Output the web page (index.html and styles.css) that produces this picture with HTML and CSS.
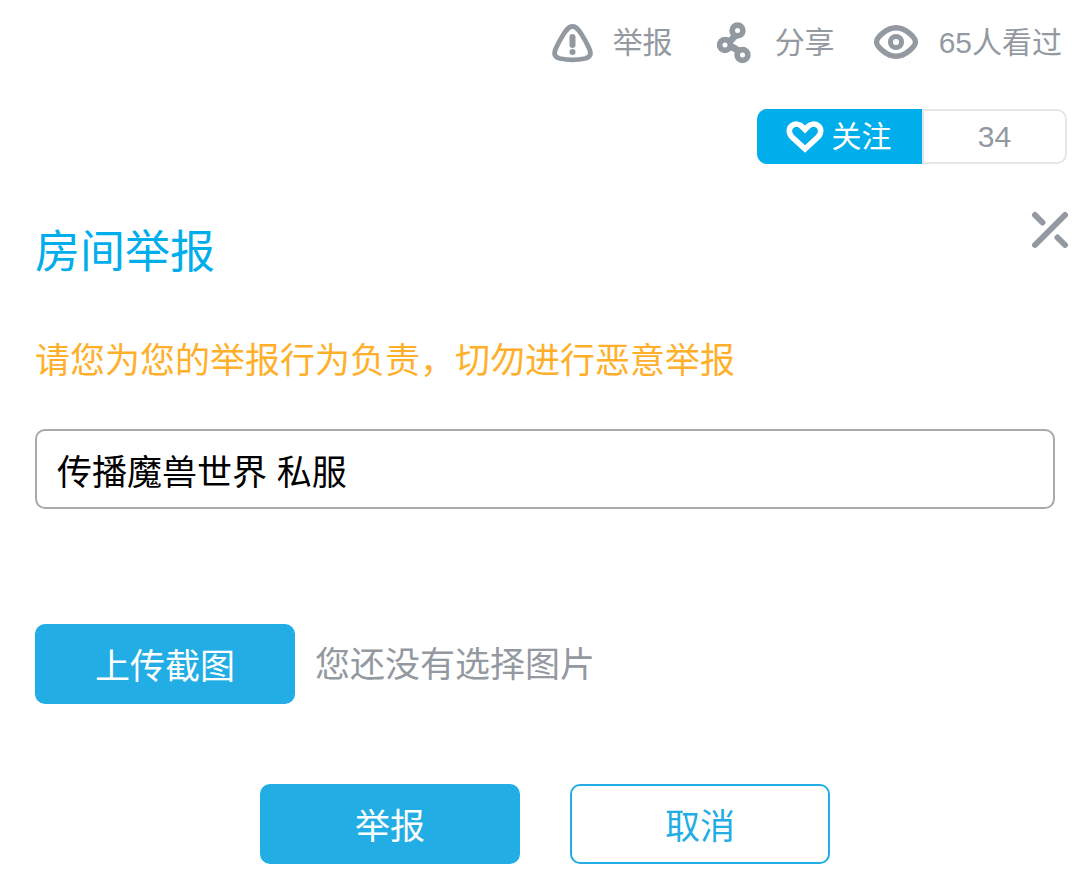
FILE: index.html
```html
<!DOCTYPE html>
<html lang="zh-CN">
<head>
<meta charset="utf-8">
<meta name="viewport" content="width=device-width, initial-scale=1">
<title>房间举报</title>
<link rel="stylesheet" href="styles.css">
</head>
<body>
<header class="room-head">
  <div class="room-tools">
    <button class="tool" type="button">
      <svg class="icon-report" width="42" height="44" viewBox="1 0 42 44" aria-hidden="true">
        <path d="M22.500 5.500C26 5.500 28 8 31 12.500C34.500 18 37 22.500 39 27C41.500 32.500 41 36 35 37.500C27 39.300 18 39.300 10 37.500C4 36 3.500 32.500 6 27C8 22.500 10.500 18 14 12.500C17 8 19 5.500 22.500 5.500Z" fill="none" stroke="currentColor" stroke-width="4.800"/>
        <path d="M22.500 16v8" fill="none" stroke="currentColor" stroke-width="6" stroke-linecap="round"/>
        <circle cx="22.500" cy="31" r="3" fill="currentColor"/>
      </svg>
      <span>举报</span>
    </button>
    <button class="tool" type="button">
      <svg class="icon-share" width="44" height="44" viewBox="0 0 44 44" aria-hidden="true">
        <path d="M26.500 9.500Q24 17 14.500 24Q25 26 31.500 34" fill="none" stroke="currentColor" stroke-width="7"/>
        <circle cx="26.500" cy="9.500" r="8.200" fill="currentColor"/>
        <circle cx="14" cy="24" r="8.200" fill="currentColor"/>
        <circle cx="31.500" cy="34" r="8.200" fill="currentColor"/>
        <circle class="hole" cx="26.500" cy="9.500" r="2.500"/>
        <circle class="hole" cx="14" cy="24" r="2.500"/>
        <circle class="hole" cx="31.500" cy="34" r="2.500"/>
      </svg>
      <span>分享</span>
    </button>
    <div class="tool">
      <svg class="icon-views" width="46" height="44" viewBox="0 0 46 44" aria-hidden="true">
        <path d="M3.500 21C3.500 17 13 6.700 23 6.700C33 6.700 42.500 17 42.500 21C42.500 25 33 35.200 23 35.200C13 35.200 3.500 25 3.500 21Z" fill="none" stroke="currentColor" stroke-width="5.400"/>
        <circle cx="23" cy="21" r="5.600" fill="none" stroke="currentColor" stroke-width="5"/>
      </svg>
      <span>65人看过</span>
    </div>
  </div>
  <div class="follow">
    <button class="follow-button" type="button">
      <svg width="38" height="34" viewBox="0 0 38 34" aria-hidden="true">
        <path d="M19 29L6 17C2.500 13.500 2.500 8.500 5.500 6C9 3.200 13.500 3.800 16 6.500L19 9.500L22 6.500C24.500 3.800 29 3.200 32.500 6C35.500 8.500 35.500 13.500 32 17Z" fill="none" stroke="currentColor" stroke-width="5.600"/>
      </svg>
      <span>关注</span>
    </button>
    <span class="follow-count">34</span>
  </div>
</header>
<main class="report">
  <div class="report-head">
    <h1 class="report-title">房间举报</h1>
    <button class="close" type="button" aria-label="关闭">
      <svg width="40" height="40" viewBox="0 0 40 40" aria-hidden="true">
        <path d="M5 35L35 5M5 5L12.500 12.500M27.500 27.500L35 35" fill="none" stroke="currentColor" stroke-width="6" stroke-linecap="round"/>
      </svg>
    </button>
  </div>
  <form class="report-form">
    <label class="warning" for="reason">请您为您的举报行为负责，切勿进行恶意举报</label>
    <input class="reason" id="reason" type="text" value="传播魔兽世界 私服">
    <div class="upload">
      <button class="button button-solid" type="button">上传截图</button>
      <span class="upload-note">您还没有选择图片</span>
    </div>
    <div class="actions">
      <button class="button button-solid" type="submit">举报</button>
      <button class="button button-outline" type="button">取消</button>
    </div>
  </form>
</main>
</body>
</html>
```

FILE: styles.css
```css
* {
  box-sizing: border-box;
}

body {
  margin: 0;
  background: #fff;
  color: #9399a0;
  font-family: "Liberation Sans", "Noto Sans CJK SC", sans-serif;
  font-size: 30px;
  line-height: 44px;
}

button,
input {
  margin: 0;
  padding: 0;
  border: 0;
  background: none;
  color: inherit;
  font: inherit;
}

button {
  cursor: pointer;
}

svg {
  display: block;
  flex: none;
}

.room-head {
  display: flex;
  flex-direction: column;
  align-items: flex-end;
  gap: 44px;
  padding: 21px 23px 0;
}

.room-tools {
  display: flex;
  gap: 38px;
  padding-right: 5px;
}

.tool {
  display: flex;
  align-items: center;
  gap: 20px;
  white-space: nowrap;
}

.hole {
  fill: #fff;
}

.follow {
  display: flex;
  width: 310px;
  height: 55px;
}

.follow-button {
  display: flex;
  align-items: center;
  justify-content: center;
  gap: 8px;
  width: 165px;
  padding-right: 2px;
  border-radius: 10px 0 0 10px;
  background: #00aeec;
  color: #fff;
}

.follow-count {
  display: flex;
  flex: 1;
  align-items: center;
  justify-content: center;
  border: 2px solid #e5e6e8;
  border-radius: 0 10px 10px 0;
}

.report {
  padding: 46px 35px 16px;
}

.report-head {
  display: flex;
  align-items: flex-start;
  justify-content: space-between;
  margin-right: -15px;
}

.report-title {
  margin: 13px 0 0;
  color: #00aeec;
  font-size: 45px;
  font-weight: 400;
  line-height: 60px;
}

.report-form {
  display: flex;
  flex-direction: column;
  font-size: 35px;
  line-height: 50px;
}

.warning {
  margin-top: 53px;
  color: #ffaf29;
}

.reason {
  width: 100%;
  height: 80px;
  margin-top: 43px;
  padding: 0 20px;
  border: 2px solid #a9a9a9;
  border-radius: 10px;
  color: #000;
}

.upload {
  display: flex;
  align-items: center;
  gap: 20px;
  margin-top: 115px;
}

.upload-note {
  padding-top: 2px;
}

.actions {
  display: flex;
  justify-content: center;
  gap: 50px;
  margin-top: 80px;
}

.button {
  width: 260px;
  height: 80px;
  padding-top: 6px;
  border: 2px solid #23ade5;
  border-radius: 10px;
}

.button-solid {
  background: #23ade5;
  color: #fff;
}

.button-outline {
  background: #fff;
  color: #23ade5;
}
```
